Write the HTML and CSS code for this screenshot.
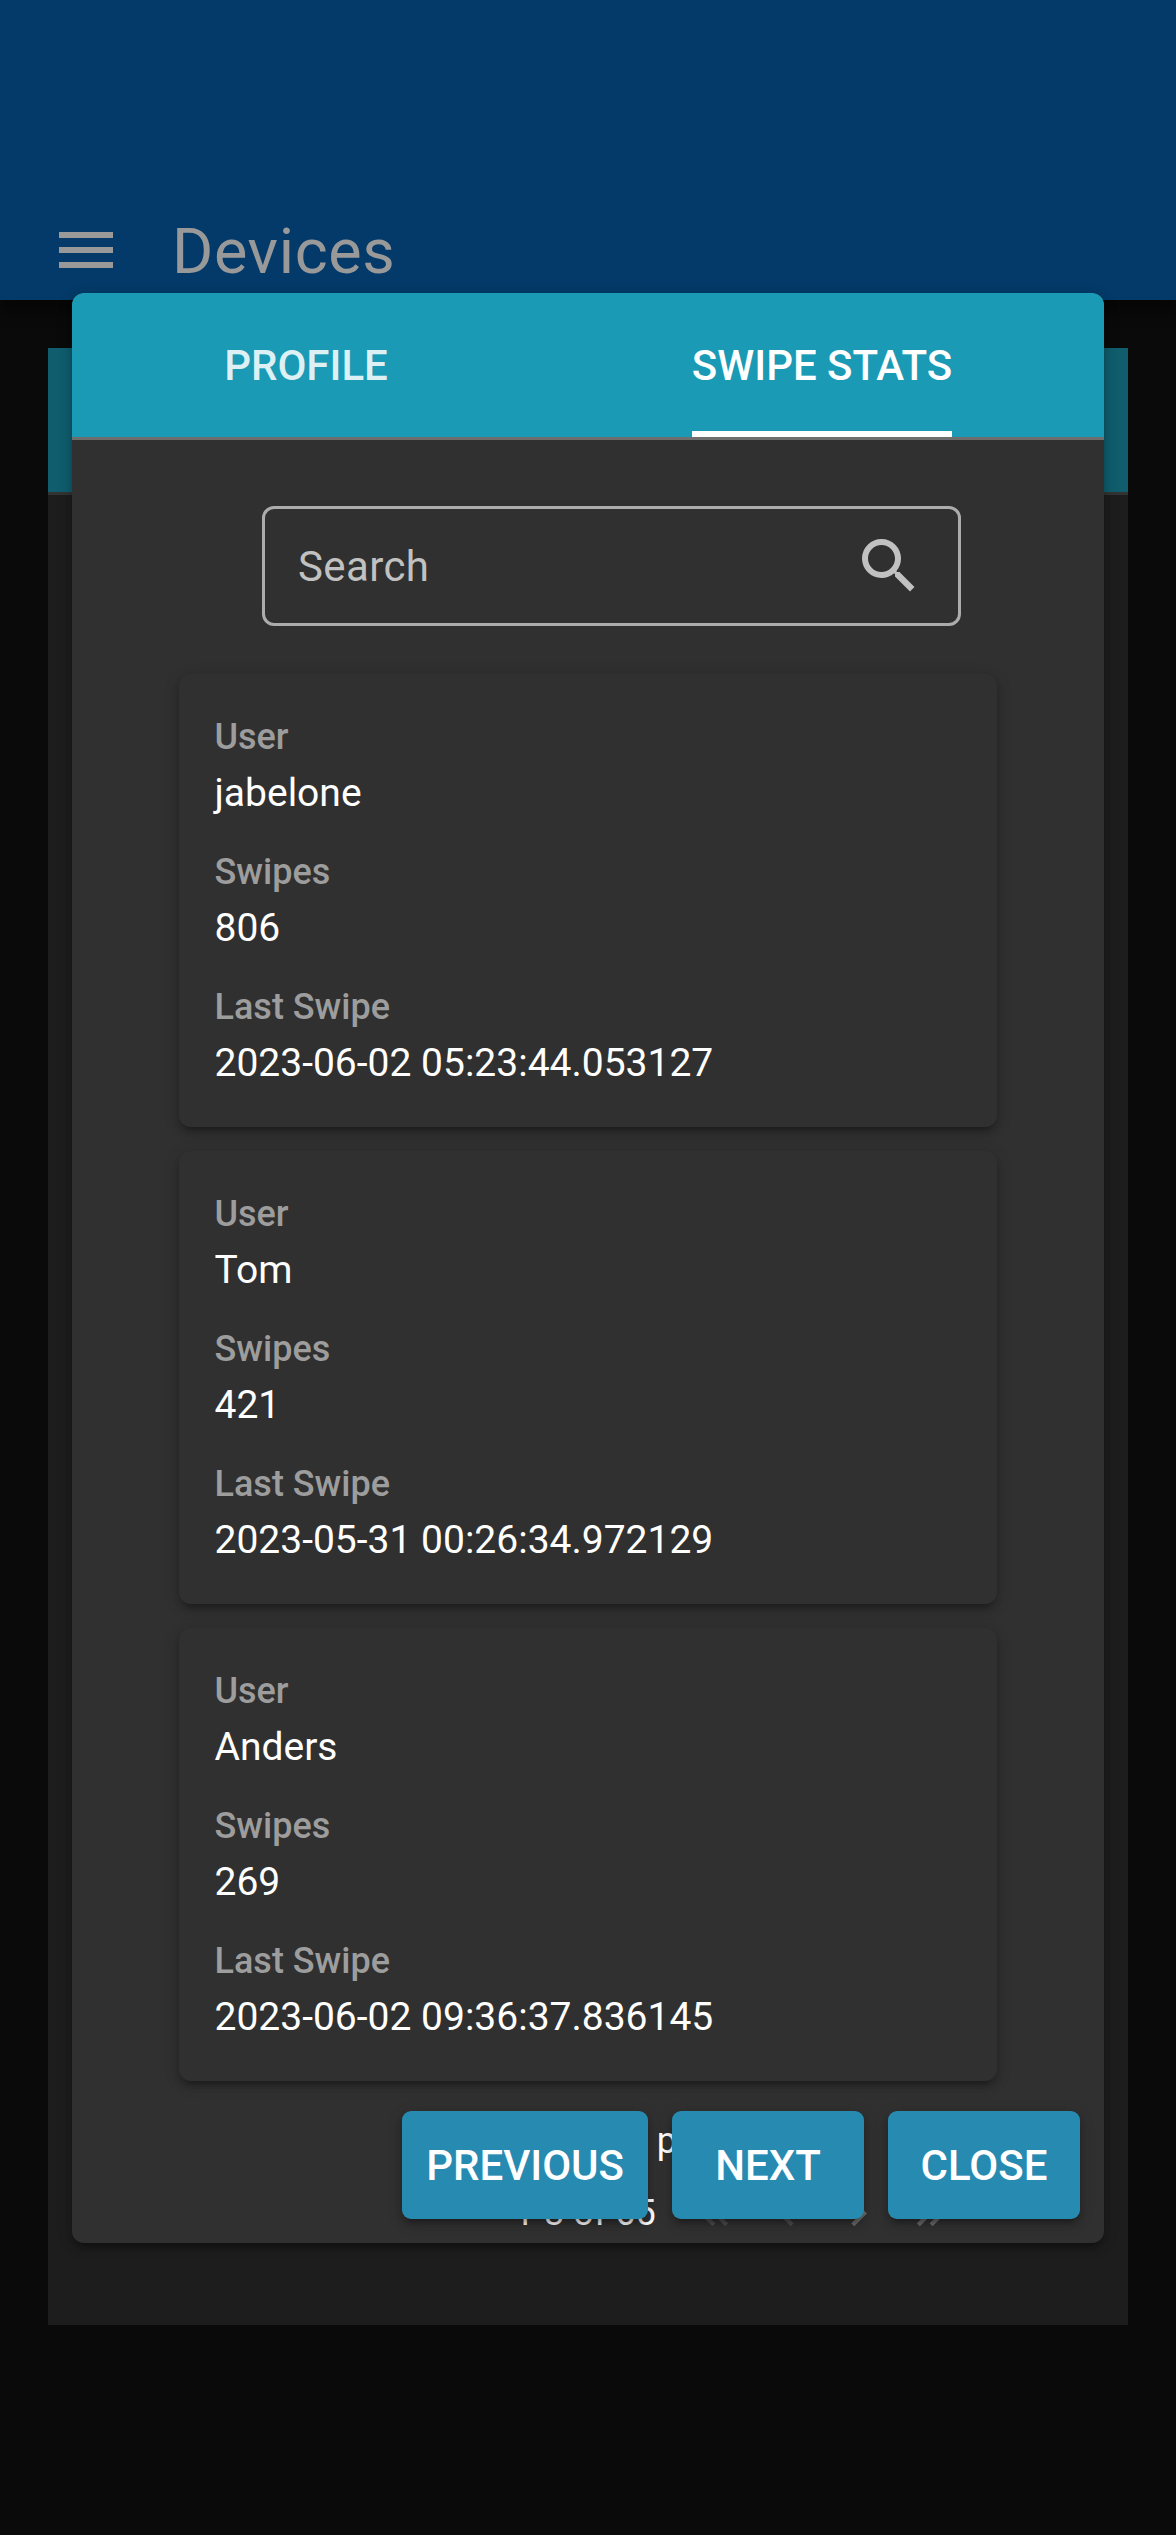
FILE: index.html
```html
<!DOCTYPE html>
<html lang="en">
<head>
<meta charset="utf-8">
<title>Devices</title>
<link rel="stylesheet" href="styles.css">
</head>
<body>
<div class="screen">
  <header class="toolbar">
    <svg class="icon" viewBox="0 0 24 24"><path d="M3 18h18v-2H3v2zm0-5h18v-2H3v2zm0-7v2h18V6H3z"/></svg>
    <h1 class="toolbar-title">Devices</h1>
  </header>
  <main class="page"><div class="panel"><div class="panel-tabs"></div></div></main>
</div>
<section class="dialog">
  <nav class="tabs">
    <div class="tab"><span class="tab-label tab-muted">PROFILE</span></div>
    <div class="tab"><span class="tab-label tab-active">SWIPE STATS</span></div>
  </nav>
  <div class="search">
    <span class="search-text">Search</span>
    <svg class="icon" viewBox="0 0 24 24"><path d="M15.5 14h-.79l-.28-.27A6.471 6.471 0 0 0 16 9.5 6.5 6.5 0 1 0 9.5 16c1.61 0 3.09-.59 4.23-1.57l.27.28v.79l5 4.99L20.49 19l-4.99-5zm-6 0C7.01 14 5 11.99 5 9.5S7.01 5 9.5 5 14 7.01 14 9.5 11.99 14 9.5 14z"/></svg>
  </div>
  <div class="cards">
    <dl class="card">
      <div><dt>User</dt><dd>jabelone</dd></div>
      <div><dt>Swipes</dt><dd>806</dd></div>
      <div><dt>Last Swipe</dt><dd>2023-06-02 05:23:44.053127</dd></div>
    </dl>
    <dl class="card">
      <div><dt>User</dt><dd>Tom</dd></div>
      <div><dt>Swipes</dt><dd>421</dd></div>
      <div><dt>Last Swipe</dt><dd>2023-05-31 00:26:34.972129</dd></div>
    </dl>
    <dl class="card">
      <div><dt>User</dt><dd>Anders</dd></div>
      <div><dt>Swipes</dt><dd>269</dd></div>
      <div><dt>Last Swipe</dt><dd>2023-06-02 09:36:37.836145</dd></div>
    </dl>
  </div>
  <div class="pagination">
    <div class="per-page">Records per page:</div>
    <div class="pager">
      <span class="range">1-3 of 65</span>
      <svg class="nav off" viewBox="0 0 24 24"><path d="M18.41 16.59L13.82 12l4.59-4.59L17 6l-6 6 6 6zM12.41 16.59L7.82 12l4.59-4.59L11 6l-6 6 6 6z"/></svg>
      <svg class="nav off" viewBox="0 0 24 24"><path d="M15.41 7.41L14 6l-6 6 6 6 1.41-1.41L10.83 12z"/></svg>
      <svg class="nav" viewBox="0 0 24 24"><path d="M10 6L8.59 7.41 13.17 12l-4.58 4.59L10 18l6-6z"/></svg>
      <svg class="nav" viewBox="0 0 24 24"><path d="M5.59 7.41L10.18 12l-4.59 4.59L7 18l6-6-6-6zM11.59 7.41L16.18 12l-4.59 4.59L13 18l6-6-6-6z"/></svg>
    </div>
  </div>
  <div class="actions">
    <button class="btn">PREVIOUS</button>
    <button class="btn">NEXT</button>
    <button class="btn">CLOSE</button>
  </div>
</section>
</body>
</html>
```
FILE: styles.css
```css
* { box-sizing: border-box; }
body { margin: 0; height: 2538px; position: relative; background: #fff; font-family: Roboto, sans-serif; overflow: hidden; }
.screen { height: 2535px; background: #0a0a0a; }
.icon { width: 72px; height: 72px; fill: currentColor; display: block; flex: none; }

.toolbar { height: 300px; padding: 200px 36px 0 50px; display: flex; align-items: center; background: #033a69; color: #999; box-shadow: 0 6px 12px -3px rgba(0,0,0,.4), 0 12px 15px rgba(0,0,0,.2); }
.toolbar-title { margin: 0 0 0 50px; padding-top: 4px; font-size: 63px; font-weight: 400; letter-spacing: .63px; line-height: 96px; }
.page { padding: 48px; }
.panel { height: 1977px; background: #1d1d1d; }
.panel-tabs { height: 147px; background: #0f5d6d; border-bottom: 3px solid #333; }

/* The dialog floats over the dimmed page */
.dialog { position: absolute; left: 72px; top: 293px; width: 1032px; height: 1950px; overflow: visible; border-radius: 12px; background: #303030; box-shadow: 0 3px 15px rgba(0,0,0,.2), 0 6px 6px rgba(0,0,0,.14), 0 9px 3px -6px rgba(0,0,0,.12); color: #fff; }
.tabs { display: grid; grid-template-columns: 468px 564px; height: 147px; background: #1a9ab5; border-bottom: 3px solid #6e6e6e; border-radius: 12px 12px 0 0; }
.tab { display: flex; justify-content: center; }
.tab-label { height: 144px; line-height: 146px; font-size: 42px; font-weight: 500; }
.tab-muted { color: #ddf0f4; }
.tab-active { border-bottom: 6px solid #fff; }

.search { width: 699px; height: 120px; margin: 66px 0 0 190px; padding: 0 33px; display: flex; align-items: center; justify-content: space-between; border: 3px solid #acacac; border-radius: 12px; color: #c1c1c1; font-size: 42px; letter-spacing: .39px; }
.search-text { padding-top: 1px; }

.cards { margin: 48px 107px 0; display: grid; gap: 24px; }
.card { margin: 0; height: 453px; padding: 36px 35.5px 33px; display: flex; flex-direction: column; gap: 23px; border-radius: 12px; background: #303030; box-shadow: 0 3px 15px rgba(0,0,0,.2), 0 6px 6px rgba(0,0,0,.14), 0 9px 3px -6px rgba(0,0,0,.12); }
dt { font-size: 36px; font-weight: 500; line-height: 54px; color: #9d9d9d; }
dd { margin: 0; font-size: 39px; line-height: 58px; }

.pagination { margin-top: 24px; font-size: 36px; color: #fff; }
.per-page { height: 72px; padding-left: 382px; line-height: 72px; word-spacing: 1px; }
.pager { height: 72px; display: flex; align-items: center; padding-left: 442px; }
.range { width: 175px; }
.nav { width: 51px; height: 51px; margin-right: 21px; fill: #6a6a6a; }
.nav.off { fill: #4c4c4c; }

.actions { position: absolute; right: 24px; bottom: 24px; display: flex; gap: 24px; }
.btn { height: 108px; min-width: 192px; padding: 1px 24px 0; border: 0; border-radius: 9px; background: #278ab1; color: #fff; font: 500 42px/108px Roboto, sans-serif; box-shadow: 0 3px 15px rgba(0,0,0,.2), 0 6px 6px rgba(0,0,0,.14), 0 9px 3px -6px rgba(0,0,0,.12); }
```
